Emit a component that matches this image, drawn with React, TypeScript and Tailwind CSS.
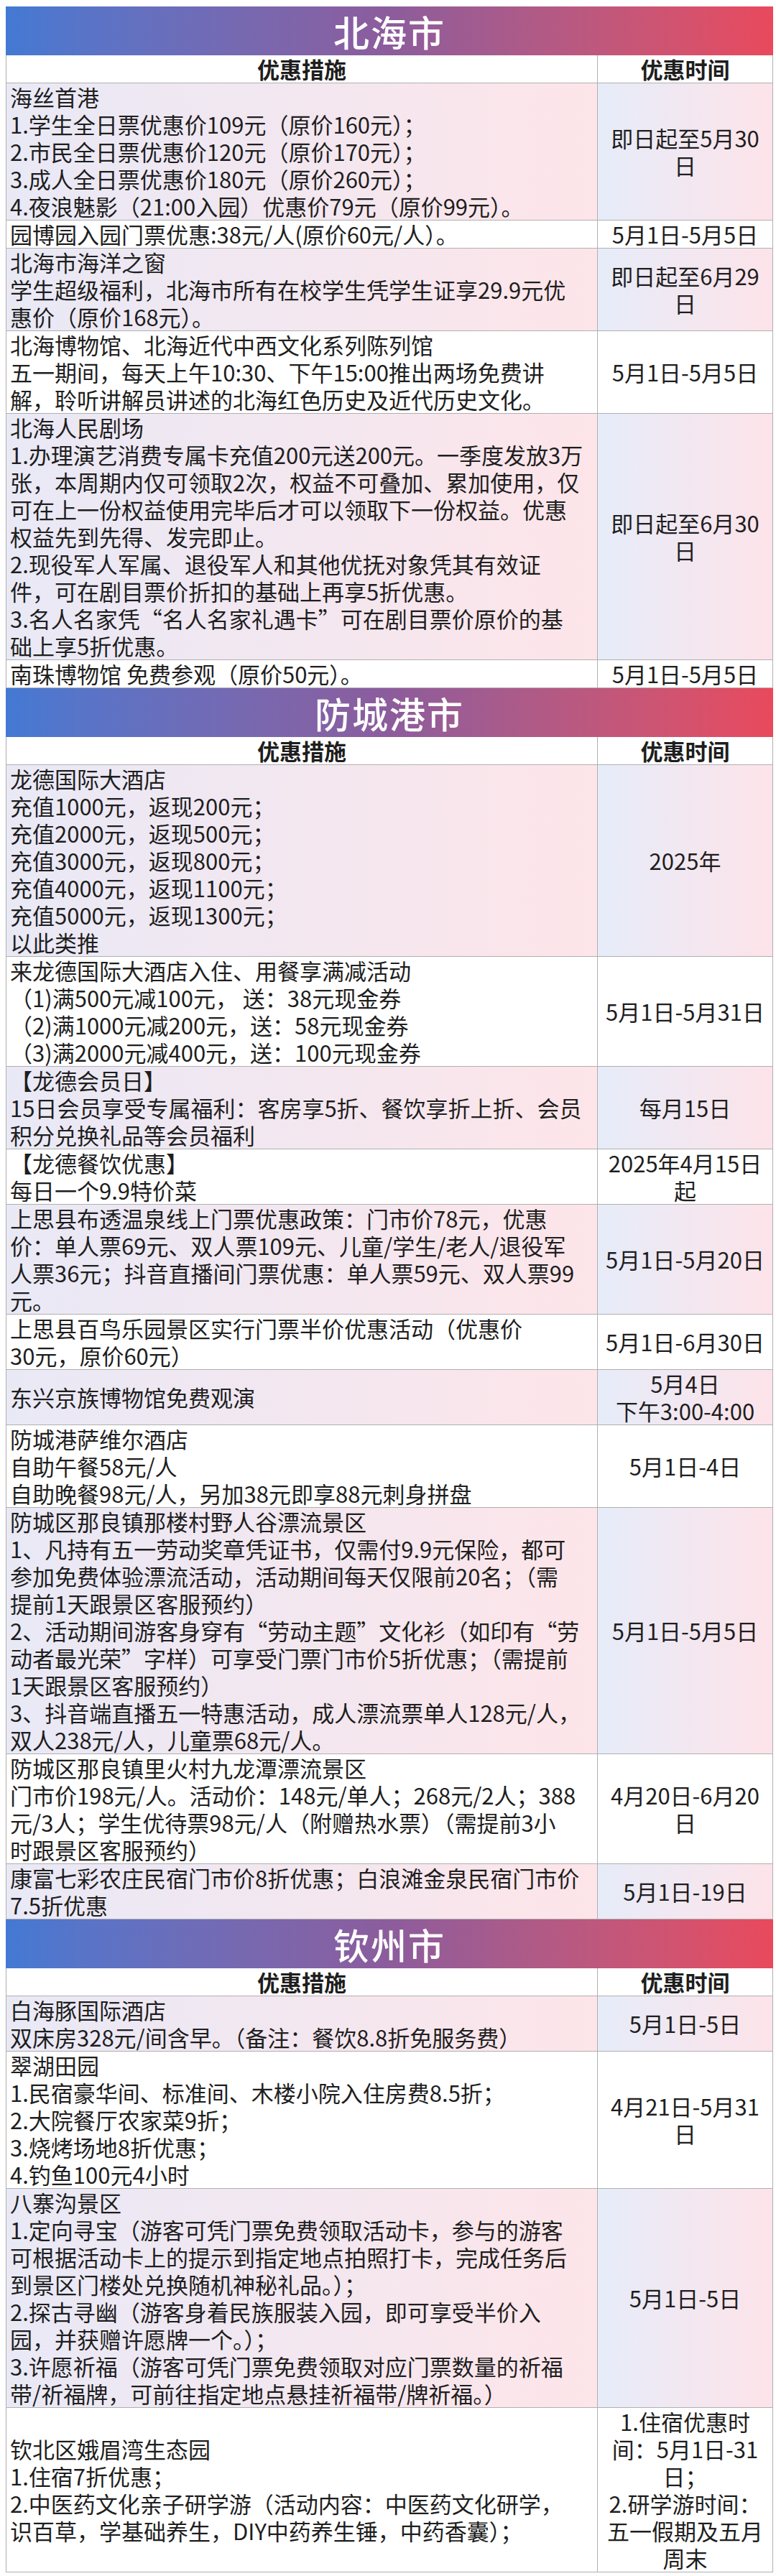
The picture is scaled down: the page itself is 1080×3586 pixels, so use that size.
import React from 'react';

type Row = { left: string[]; right: string[] };
type Section = { city: string; rows: Row[] };

const sections: Section[] = [
  {
    city: '北海市',
    rows: [
      {
        left: [
          '海丝首港',
          '1.学生全日票优惠价109元（原价160元）；',
          '2.市民全日票优惠价120元（原价170元）；',
          '3.成人全日票优惠价180元（原价260元）；',
          '4.夜浪魅影（21:00入园）优惠价79元（原价99元）。',
        ],
        right: ['即日起至5月30', '日'],
      },
      { left: ['园博园入园门票优惠:38元/人(原价60元/人）。'], right: ['5月1日-5月5日'] },
      {
        left: ['北海市海洋之窗', '学生超级福利，北海市所有在校学生凭学生证享29.9元优', '惠价（原价168元）。'],
        right: ['即日起至6月29', '日'],
      },
      {
        left: [
          '北海博物馆、北海近代中西文化系列陈列馆',
          '五一期间，每天上午10:30、下午15:00推出两场免费讲',
          '解，聆听讲解员讲述的北海红色历史及近代历史文化。',
        ],
        right: ['5月1日-5月5日'],
      },
      {
        left: [
          '北海人民剧场',
          '1.办理演艺消费专属卡充值200元送200元。一季度发放3万',
          '张，本周期内仅可领取2次，权益不可叠加、累加使用，仅',
          '可在上一份权益使用完毕后才可以领取下一份权益。优惠',
          '权益先到先得、发完即止。',
          '2.现役军人军属、退役军人和其他优抚对象凭其有效证',
          '件，可在剧目票价折扣的基础上再享5折优惠。',
          '3.名人名家凭“名人名家礼遇卡”可在剧目票价原价的基',
          '础上享5折优惠。',
        ],
        right: ['即日起至6月30', '日'],
      },
      { left: ['南珠博物馆 免费参观（原价50元）。'], right: ['5月1日-5月5日'] },
    ],
  },
  {
    city: '防城港市',
    rows: [
      {
        left: [
          '龙德国际大酒店',
          '充值1000元，返现200元；',
          '充值2000元，返现500元；',
          '充值3000元，返现800元；',
          '充值4000元，返现1100元；',
          '充值5000元，返现1300元；',
          '以此类推',
        ],
        right: ['2025年'],
      },
      {
        left: [
          '来龙德国际大酒店入住、用餐享满减活动',
          '（1)满500元减100元， 送：38元现金券',
          '（2)满1000元减200元，送：58元现金券',
          '（3)满2000元减400元，送：100元现金券',
        ],
        right: ['5月1日-5月31日'],
      },
      {
        left: ['【龙德会员日】', '15日会员享受专属福利：客房享5折、餐饮享折上折、会员', '积分兑换礼品等会员福利'],
        right: ['每月15日'],
      },
      { left: ['【龙德餐饮优惠】', '每日一个9.9特价菜'], right: ['2025年4月15日', '起'] },
      {
        left: [
          '上思县布透温泉线上门票优惠政策：门市价78元，优惠',
          '价：单人票69元、双人票109元、儿童/学生/老人/退役军',
          '人票36元；抖音直播间门票优惠：单人票59元、双人票99',
          '元。',
        ],
        right: ['5月1日-5月20日'],
      },
      { left: ['上思县百鸟乐园景区实行门票半价优惠活动（优惠价', '30元，原价60元）'], right: ['5月1日-6月30日'] },
      { left: ['东兴京族博物馆免费观演'], right: ['5月4日', '下午3:00-4:00'] },
      {
        left: ['防城港萨维尔酒店', '自助午餐58元/人', '自助晚餐98元/人，另加38元即享88元刺身拼盘'],
        right: ['5月1日-4日'],
      },
      {
        left: [
          '防城区那良镇那楼村野人谷漂流景区',
          '1、凡持有五一劳动奖章凭证书，仅需付9.9元保险，都可',
          '参加免费体验漂流活动，活动期间每天仅限前20名；（需',
          '提前1天跟景区客服预约）',
          '2、活动期间游客身穿有“劳动主题”文化衫（如印有“劳',
          '动者最光荣”字样）可享受门票门市价5折优惠；（需提前',
          '1天跟景区客服预约）',
          '3、抖音端直播五一特惠活动，成人漂流票单人128元/人，',
          '双人238元/人，儿童票68元/人。',
        ],
        right: ['5月1日-5月5日'],
      },
      {
        left: [
          '防城区那良镇里火村九龙潭漂流景区',
          '门市价198元/人。活动价：148元/单人；268元/2人；388',
          '元/3人；学生优待票98元/人（附赠热水票）（需提前3小',
          '时跟景区客服预约）',
        ],
        right: ['4月20日-6月20', '日'],
      },
      {
        left: ['康富七彩农庄民宿门市价8折优惠；白浪滩金泉民宿门市价', '7.5折优惠'],
        right: ['5月1日-19日'],
      },
    ],
  },
  {
    city: '钦州市',
    rows: [
      { left: ['白海豚国际酒店', '双床房328元/间含早。（备注：餐饮8.8折免服务费）'], right: ['5月1日-5日'] },
      {
        left: [
          '翠湖田园',
          '1.民宿豪华间、标准间、木楼小院入住房费8.5折；',
          '2.大院餐厅农家菜9折；',
          '3.烧烤场地8折优惠；',
          '4.钓鱼100元4小时',
        ],
        right: ['4月21日-5月31', '日'],
      },
      {
        left: [
          '八寨沟景区',
          '1.定向寻宝（游客可凭门票免费领取活动卡，参与的游客',
          '可根据活动卡上的提示到指定地点拍照打卡，完成任务后',
          '到景区门楼处兑换随机神秘礼品。）；',
          '2.探古寻幽（游客身着民族服装入园，即可享受半价入',
          '园，并获赠许愿牌一个。）；',
          '3.许愿祈福（游客可凭门票免费领取对应门票数量的祈福',
          '带/祈福牌，可前往指定地点悬挂祈福带/牌祈福。）',
        ],
        right: ['5月1日-5日'],
      },
      {
        left: [
          '钦北区娥眉湾生态园',
          '1.住宿7折优惠；',
          '2.中医药文化亲子研学游（活动内容：中医药文化研学，',
          '识百草，学基础养生，DIY中药养生锤，中药香囊）；',
        ],
        right: ['1.住宿优惠时', '间：5月1日-31', '日；', '2.研学游时间：', '五一假期及五月', '周末'],
      },
    ],
  },
];

const Lines = ({ lines }: { lines: string[] }) => (
  <>
    {lines.map((line, i) => (
      <div key={i} className="h-[38px] leading-[38px] whitespace-nowrap">
        {line}
      </div>
    ))}
  </>
);

const CitySection = ({ section }: { section: Section }) => (
  <div>
    <div className="h-[68px] flex items-center justify-center bg-linear-to-r from-[#4379d3] via-[#8c5c9c] to-[#e9495c]">
      <span className="text-white text-[50px] font-medium leading-none tracking-[2px]">{section.city}</span>
    </div>

    <div className="flex h-[39px] border-x border-b border-[#b0b0b0] bg-white font-bold">
      <div className="w-[823px] border-r border-[#b0b0b0] flex items-center justify-center">优惠措施</div>
      <div className="flex-1 flex items-center justify-center">优惠时间</div>
    </div>

    {section.rows.map((row, i) => {
      const shaded = i % 2 === 0;
      return (
        <div key={i} className="flex border-x border-b border-[#b0b0b0]">
          <div
            className={`w-[823px] border-r border-[#b0b0b0] pl-[5px] flex flex-col justify-center ${
              shaded ? 'bg-linear-to-r from-[#e9e9f6] to-[#fde5e9]' : 'bg-white'
            }`}
          >
            <Lines lines={row.left} />
          </div>
          <div
            className={`flex-1 flex flex-col justify-center items-center text-center ${
              shaded ? 'bg-linear-to-r from-[#e6ecf9] to-[#fde3e9]' : 'bg-white'
            }`}
          >
            <Lines lines={row.right} />
          </div>
        </div>
      );
    })}
  </div>
);

export default function App() {
  return (
    <div className="w-[1080px] min-h-[3586px] bg-white pt-[9px] pl-[8px] font-['Noto_Sans_CJK_SC','Noto_Sans',sans-serif] text-[31px] text-[#1e1e1e]">
      <div className="w-[1068px]">
        {sections.map((section) => (
          <CitySection key={section.city} section={section} />
        ))}
      </div>
    </div>
  );
}
